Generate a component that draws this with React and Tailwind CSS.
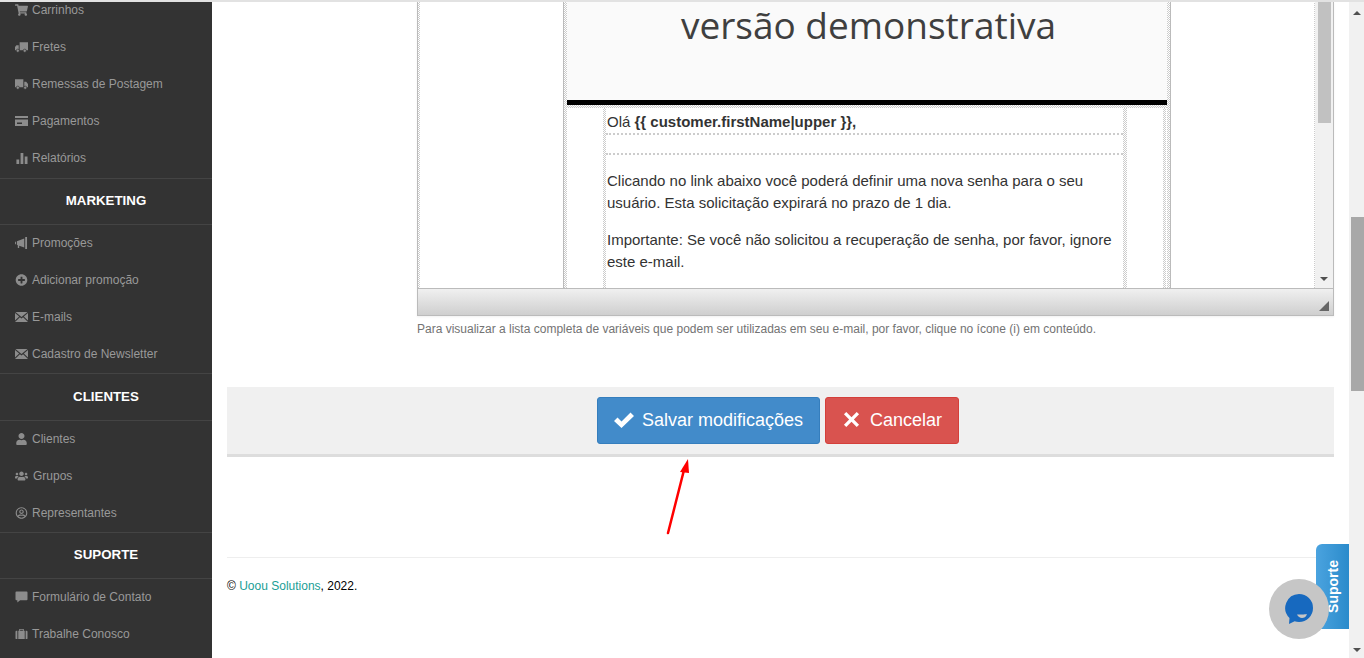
import { FaShoppingCart, FaPlusCircle, FaUser, FaUsers, FaRegUserCircle } from "react-icons/fa";

// faixa quadriculada das guias de tabela do editor
const guide = "bg-[image:repeating-conic-gradient(#cccccc_0_25%,#ffffff_0_50%)] bg-size-[2px_2px]";

function Fretes({ className }) {
  return (
    <svg viewBox="0 0 14 12" className={className} fill="currentColor">
      <path d="M5 1h9v8.500H5zM1.500 4H4v5.500H0V6z" />
      <circle cx="3" cy="10" r="1.700" stroke="#333333" strokeWidth="0.700" />
      <circle cx="10.500" cy="10" r="1.700" stroke="#333333" strokeWidth="0.700" />
    </svg>
  );
}

function Remessas({ className }) {
  return (
    <svg viewBox="0 0 14 12" className={className} fill="currentColor">
      <path d="M0 1h9v8.500H0zM10 3.500h2l2 2.500v3.500h-4z" />
      <circle cx="3" cy="10" r="1.700" stroke="#333333" strokeWidth="0.700" />
      <circle cx="11" cy="10" r="1.700" stroke="#333333" strokeWidth="0.700" />
    </svg>
  );
}

function Card({ className }) {
  return (
    <svg viewBox="0 0 13 12" className={className} fill="currentColor">
      <path fillRule="evenodd" d="M0 1h13v2H0zM0 4.500h13V11H0zM2 7.500v1.500h5V7.500z" />
    </svg>
  );
}

function Bars({ className }) {
  return (
    <svg viewBox="0 0 13 13" className={className} fill="currentColor">
      <path d="M1 8h3v5H1zM5.500 1h3v12h-3zM10 5h3v8h-3z" />
    </svg>
  );
}

function Bullhorn({ className }) {
  return (
    <svg viewBox="0 0 14 13" className={className} fill="currentColor">
      <path d="M0 5.500 1 5v3l-1-.5zM2 4.500 10 1.500v10L4.500 9.500V12H3V9l-1-.5zM11 0h2v13h-2z" />
    </svg>
  );
}

function Envelope({ className }) {
  return (
    <svg viewBox="0 0 14 11" className={className} fill="currentColor">
      <path d="M.5 0h13L7 5.500zM0 1.200v8L4.500 5zM14 1.200v8L9.500 5zM5.300 5.700 0 11h14L8.700 5.700 7 7.200z" />
    </svg>
  );
}

function Bubble({ className }) {
  return (
    <svg viewBox="0 0 13 13" className={className} fill="currentColor">
      <path d="M1 .5h11a1 1 0 0 1 1 1v7.500a1 1 0 0 1-1 1H5l-3 2.500V10H1a1 1 0 0 1-1-1V1.500a1 1 0 0 1 1-1z" />
    </svg>
  );
}

function Briefcase({ className }) {
  return (
    <svg viewBox="0 0 13 13" className={className} fill="currentColor">
      <path d="M4 3V1h5v2h-1V2H5v1zM0 4a1 1 0 0 1 1-1h1v9H1a1 1 0 0 1-1-1zM3 3h7v9H3zM11 3h1a1 1 0 0 1 1 1v7a1 1 0 0 1-1 1h-1z" />
    </svg>
  );
}

const sections = [
  {
    pad: "pb-[2px]",
    items: [
      ["Carrinhos", FaShoppingCart],
      ["Fretes", Fretes],
      ["Remessas de Postagem", Remessas],
      ["Pagamentos", Card],
      ["Relatórios", Bars],
    ],
  },
  {
    title: "MARKETING",
    head: "h-[47px] pb-[2px]",
    pad: "pb-[1px]",
    items: [
      ["Promoções", Bullhorn],
      ["Adicionar promoção", FaPlusCircle],
      ["E-mails", Envelope],
      ["Cadastro de Newsletter", Envelope],
    ],
  },
  {
    title: "CLIENTES",
    head: "h-[48px]",
    pad: "pb-[1px]",
    items: [
      ["Clientes", FaUser],
      ["Grupos", FaUsers],
      ["Representantes", FaRegUserCircle],
    ],
  },
  {
    title: "SUPORTE",
    head: "h-[47px] pb-[2px]",
    pad: "",
    items: [
      ["Formulário de Contato", Bubble],
      ["Trabalhe Conosco", Briefcase],
    ],
  },
];

function Sidebar() {
  return (
    <aside className="w-[212px] shrink-0 bg-[#333333] overflow-hidden text-[12px]">
      <div className="-mt-[11px]">
        {sections.map((section, i) => (
          <div key={i} className={section.pad}>
            {section.title ? (
              <div className={`${section.head} -mb-[1px] flex items-center justify-center border-y border-[#444444] text-[13.3px] font-bold text-white`}>
                {section.title}
              </div>
            ) : null}
            {section.items.map(([label, Icon]) => (
              <div key={label} className="h-[37px] pl-[15px] flex items-center text-[#999999]">
                <span className="w-[17px] shrink-0 text-[#8c8c8c]">
                  <Icon className="w-[13px] h-[12px]" />
                </span>
                <span className={label === "Grupos" ? "ml-[1px]" : ""}>{label}</span>
              </div>
            ))}
          </div>
        ))}
      </div>
    </aside>
  );
}

function Editor() {
  return (
    <div className="ml-[190px] h-[314px] border border-t-0 border-[#bbbbbb] flex flex-col shadow-[0_1px_2px_rgba(0,0,0,0.06)]">
      <div className="h-[286px] flex overflow-hidden bg-white">
        <div className={`w-[2px] shrink-0 ${guide}`} />
        <div className="w-[143px] shrink-0" />
        <div className="w-[1px] shrink-0 bg-[#bbbbbb]" />
        <div className={`w-[3px] shrink-0 ${guide}`} />

        <div className="w-[600px] shrink-0">
          <div className="h-[98px] pl-[3px] bg-[#fafafa] text-center font-['Open_Sans',sans-serif] text-[37px] leading-[46px] text-[#3f3f3f]">
            versão demonstrativa
          </div>
          <div className="h-[5px] bg-black" />
          <div className={`h-[3px] ${guide}`} />
          <div className="flex font-['Liberation_Sans',sans-serif] text-[15px] leading-[22px] text-[#333333]">
            <div className="w-[36px] shrink-0" />
            <div className={`w-[3px] h-[200px] shrink-0 ${guide}`} />
            <div className="w-[517px] shrink-0">
              <div className="h-[27px] pt-[3px] pl-[1px] border-b-2 border-dotted border-[#cccccc]">
                Olá <strong>{"{{ customer.firstName|upper }},"}</strong>
              </div>
              <div className="h-[20px] border-b-2 border-dotted border-[#cccccc]" />
              <p className="mt-[15px] pl-[1px] pr-[8px]">
                Clicando no link abaixo você poderá definir uma nova senha para o seu usuário. Esta solicitação expirará no prazo de 1 dia.
              </p>
              <p className="mt-[15px] pl-[1px] pr-[8px]">
                Importante: Se você não solicitou a recuperação de senha, por favor, ignore este e-mail.
              </p>
            </div>
            <div className={`w-[4px] h-[200px] shrink-0 ${guide}`} />
            <div className="w-[36px] shrink-0" />
            <div className={`w-[3px] h-[200px] shrink-0 ${guide}`} />
          </div>
        </div>

        <div className={`w-[3px] shrink-0 ${guide}`} />
        <div className="w-[1px] shrink-0 bg-[#bbbbbb]" />
        <div className="flex-1" />
        <div className={`w-[1px] shrink-0 ${guide}`} />
        <div className="w-[18px] shrink-0 bg-[#f1f1f1] flex flex-col">
          <div className="ml-[3px] w-[13px] h-[121px] bg-[#c1c1c1]" />
          <div className="mt-auto mb-[7px] ml-[5px] w-0 h-0 border-x-[4px] border-x-transparent border-t-[4px] border-t-[#505050]" />
        </div>
      </div>
      <div className="flex-1 border-t border-[#bbbbbb] bg-gradient-to-b from-[#f0f0f0] to-[#cfcfcf] flex items-end justify-end pr-[4px] pb-[4px]">
        <svg viewBox="0 0 10 10" className="w-[10px] h-[10px]" fill="#666666">
          <path d="M10 0v10H0z" />
        </svg>
      </div>
    </div>
  );
}

function PageScrollbar() {
  return (
    <div className="w-[15px] shrink-0 bg-[#f1f1f1] flex flex-col">
      <div className="mt-[9px] ml-[4px] w-0 h-0 border-x-[4px] border-x-transparent border-b-[4px] border-b-[#505050]" />
      <div className="mt-[202px] ml-[2px] w-[13px] h-[174px] bg-[#a8a8a8]" />
      <div className="mt-auto mb-[6px] ml-[4px] w-0 h-0 border-x-[4px] border-x-transparent border-t-[4px] border-t-[#505050]" />
    </div>
  );
}

export default function App() {
  return (
    <div className="relative h-[658px] overflow-hidden bg-white border-t-2 border-[#e2e2e2] flex font-['Liberation_Sans',sans-serif]">
      <Sidebar />

      <main className="flex-1 min-w-0 px-[15px]">
        <Editor />
        <p className="ml-[190px] mt-[5px] text-[12px] leading-[17px] text-[#737373]">
          Para visualizar a lista completa de variáveis que podem ser utilizadas em seu e-mail, por favor, clique no ícone (i) em conteúdo.
        </p>

        <div className="mt-[49px] h-[70px] pr-[5px] bg-[#f0f0f0] border-b-[3px] border-[#dddddd] flex justify-center gap-[5px] pt-[10px]">
          <button className="w-[223px] h-[47px] rounded-[3px] border border-[#357ebd] bg-[#428bca] text-white text-[18px] flex items-center pl-[16px] gap-[8px]">
            <svg viewBox="0 0 20 16" className="w-[20px] h-[16px] -mt-[2px]" fill="currentColor">
              <path d="M0 9 3.500 5.500 7.500 9.500 16.500.5 20 4 7.500 16z" />
            </svg>
            Salvar modificações
          </button>
          <button className="w-[134px] h-[47px] rounded-[3px] border border-[#d43f3a] bg-[#d9534f] text-white text-[18px] flex items-center pl-[17px] gap-[10px]">
            <svg viewBox="0 0 18 18" className="w-[17px] h-[17px] -mt-[3px]" fill="currentColor">
              <path d="M3.500 1 9 6.500 14.500 1 17 3.500 11.500 9 17 14.500 14.500 17 9 11.500 3.500 17 1 14.500 6.500 9 1 3.500z" />
            </svg>
            Cancelar
          </button>
        </div>

        <div className="mt-[100px] pt-[20px] border-t border-[#eeeeee] text-[12px] leading-[17px] text-black">
          © <span className="text-[#1a9e96]">Uoou Solutions</span>, 2022.
        </div>
      </main>

      <PageScrollbar />

      {/* seta vermelha sobre a captura */}
      <svg className="absolute left-[660px] top-[456px] w-[36px] h-[80px]" viewBox="0 0 36 80" fill="none">
        <path d="M8 75 24 12" stroke="#ff0000" strokeWidth="2.500" strokeLinecap="round" />
        <path d="M28 1 29 15 20 14z" fill="#ff0000" />
      </svg>

      <div className="absolute left-[1316px] top-[542px] w-[33px] h-[85px] rounded-tl-[6px] bg-gradient-to-r from-[#4aa3df] to-[#2a8bcb] flex items-center justify-center">
        <span className="-rotate-90 ml-[2px] text-[14px] font-bold text-white">Suporte</span>
      </div>

      <div className="absolute left-[1269px] top-[577px] w-[60px] h-[60px] rounded-full bg-[#c6c6c6] flex items-center justify-center">
        <svg viewBox="0 0 30 32" className="w-[30px] h-[32px]">
          <path d="M15 1a14 14 0 0 1 0 28c-1.500 0-3-.2-4.400-.7L5 31l.5-6A14 14 0 0 1 15 1z" fill="#1769bf" />
          <path d="M13 21.500c2 0 8 0 10-.5-1 3-3 4-5 4s-4-1.500-5-3.500z" fill="#c6c6c6" />
        </svg>
      </div>
    </div>
  );
}
